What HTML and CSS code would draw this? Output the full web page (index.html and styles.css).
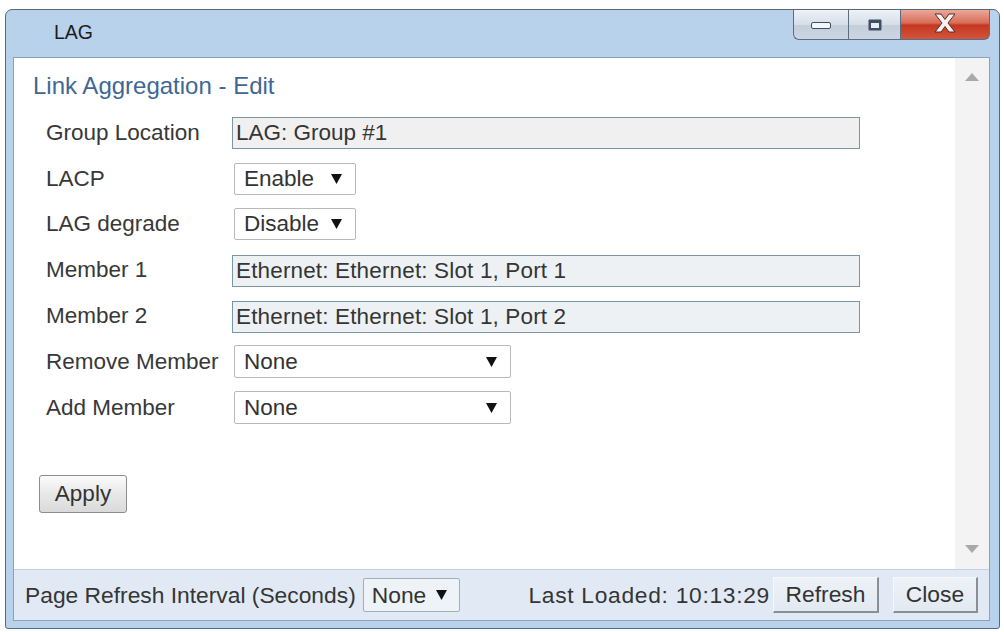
FILE: index.html
```html
<!DOCTYPE html>
<html>
<head>
<meta charset="utf-8">
<title>LAG</title>
<link rel="stylesheet" href="styles.css">
</head>
<body>
<div class="window">
  <div class="titlebar">
    <div class="title">LAG</div>
    <div class="controls">
      <div class="cbtn min">
        <svg width="20" height="8" viewBox="0 0 20 8"><rect x="0.5" y="0.5" width="19" height="6" rx="1.5" fill="#f4f7fa" stroke="#3f4f63"/></svg>
      </div>
      <div class="cbtn max">
        <svg width="14" height="12" viewBox="0 0 14 12"><rect x="0.5" y="0.5" width="13" height="11" rx="1" fill="#3f4f63"/><rect x="3" y="4" width="8" height="5" fill="#e8edf3"/></svg>
      </div>
      <div class="cbtn close">
        <svg width="24" height="20" viewBox="0 0 24 20"><path d="M2 1 H8 L12 6.5 L16 1 H22 L15 10 L22 19 H16 L12 13.5 L8 19 H2 L9 10 Z" fill="#f7f2f0" stroke="#5b2a22" stroke-width="1" stroke-linejoin="round"/></svg>
      </div>
    </div>
  </div>
  <div class="client">
    <div class="body">
      <div class="main">
        <div class="heading">Link Aggregation - Edit</div>
        <div class="form">
          <div class="label">Group Location</div>
          <div class="field"><div class="textbox">LAG: Group #1</div></div>
          <div class="label">LACP</div>
          <div class="field"><div class="select small"><span>Enable</span><svg class="arr" width="11" height="10" viewBox="0 0 11 10"><polygon points="0,0 11,0 5.5,10" fill="#111"/></svg></div></div>
          <div class="label">LAG degrade</div>
          <div class="field"><div class="select small"><span>Disable</span><svg class="arr" width="11" height="10" viewBox="0 0 11 10"><polygon points="0,0 11,0 5.5,10" fill="#111"/></svg></div></div>
          <div class="label">Member 1</div>
          <div class="field"><div class="textbox blue">Ethernet: Ethernet: Slot 1, Port 1</div></div>
          <div class="label">Member 2</div>
          <div class="field"><div class="textbox blue">Ethernet: Ethernet: Slot 1, Port 2</div></div>
          <div class="label">Remove Member</div>
          <div class="field"><div class="select wide"><span>None</span><svg class="arr" width="11" height="10" viewBox="0 0 11 10"><polygon points="0,0 11,0 5.5,10" fill="#111"/></svg></div></div>
          <div class="label">Add Member</div>
          <div class="field"><div class="select wide"><span>None</span><svg class="arr" width="11" height="10" viewBox="0 0 11 10"><polygon points="0,0 11,0 5.5,10" fill="#111"/></svg></div></div>
        </div>
        <div class="apply">Apply</div>
      </div>
      <div class="scrollbar">
        <svg width="14" height="8" viewBox="0 0 14 8"><polygon points="0,8 14,8 7,0" fill="#a9a9a9"/></svg>
        <svg width="14" height="8" viewBox="0 0 14 8"><polygon points="0,0 14,0 7,8" fill="#a9a9a9"/></svg>
      </div>
    </div>
    <div class="footer">
      <span class="ftext">Page Refresh Interval (Seconds)</span>
      <div class="select fsel"><span>None</span><svg class="arr" width="11" height="10" viewBox="0 0 11 10"><polygon points="0,0 11,0 5.5,10" fill="#111"/></svg></div>
      <span class="loaded">Last Loaded: 10:13:29</span>
      <div class="fbtn refresh">Refresh</div>
      <div class="fbtn closeb">Close</div>
    </div>
  </div>
</div>
</body>
</html>
```

FILE: styles.css
```css
html, body {
  margin: 0;
  padding: 0;
  background: #ffffff;
}
body {
  font-family: "Liberation Sans", Arial, sans-serif;
  color: #333333;
}
.window {
  box-sizing: border-box;
  margin: 9px 0 0 5px;
  width: 995px;
  height: 620px;
  border: 1px solid #56697d;
  border-radius: 7px 7px 3px 3px;
  background: #b9d2ec;
  display: flex;
  flex-direction: column;
}
.titlebar {
  height: 47px;
  flex: none;
  display: flex;
  justify-content: space-between;
  align-items: flex-start;
}
.title {
  margin: 12px 0 0 48px;
  font-size: 19.5px;
  line-height: 20px;
  color: #1c1c1c;
}
.controls {
  display: flex;
  margin-right: 9px;
  height: 30px;
}
.cbtn {
  box-sizing: border-box;
  height: 30px;
  display: flex;
  align-items: center;
  justify-content: center;
  border: 1px solid #5b6d80;
  border-top: none;
}
.min {
  width: 55px;
  border-right: none;
  border-bottom-left-radius: 6px;
  background: linear-gradient(#eef2f7, #d6dee8 50%, #c3cedb 51%, #ccd6e2);
}
.min svg { margin-top: 3px; }
.max {
  width: 52px;
  border-right: none;
  background: linear-gradient(#eef2f7, #d6dee8 50%, #c3cedb 51%, #ccd6e2);
}
.close {
  width: 90px;
  border-bottom-right-radius: 6px;
  background: linear-gradient(#e9a898, #d86c58 45%, #c5371f 52%, #d2553d);
}
.close svg { margin-top: -3px; }
.client {
  flex: 1;
  margin: 0 9px 7px 7px;
  border: 1px solid #8ca2b8;
  background: #ffffff;
  display: flex;
  flex-direction: column;
  min-height: 0;
}
.body {
  flex: 1;
  display: flex;
  min-height: 0;
}
.main {
  flex: 1;
  padding: 14px 0 0 19px;
}
.heading {
  font-size: 24px;
  line-height: 28px;
  color: #3f6796;
  margin-bottom: 10px;
}
.form {
  display: grid;
  grid-template-columns: 186px auto;
  grid-auto-rows: 45.8px;
  align-items: center;
  margin-left: 13px;
}
.label {
  font-size: 22.5px;
  color: #383838;
  white-space: nowrap;
}
.field {
  display: flex;
  align-items: center;
}
.textbox {
  box-sizing: border-box;
  width: 628px;
  height: 32px;
  margin-top: 1px;
  border: 1px solid #7a96a4;
  background: #f0f0f0;
  font-size: 22.5px;
  line-height: 30px;
  padding-left: 3px;
  color: #353535;
  white-space: nowrap;
}
.textbox.blue {
  background: #edf1f4;
  letter-spacing: 0.15px;
}
.select {
  box-sizing: border-box;
  height: 32px;
  border: 1px solid #b9b9b9;
  border-radius: 2px;
  background: #ffffff;
  display: flex;
  align-items: center;
  justify-content: space-between;
  padding: 0 13px 0 9px;
  font-size: 22.5px;
  color: #333333;
}
.select.small {
  width: 122px;
  margin-left: 2px;
}
.select.wide {
  width: 277px;
  height: 33px;
  margin-left: 2px;
}
.arr { flex: none; }
.apply {
  box-sizing: border-box;
  width: 88px;
  height: 38px;
  margin: 44px 0 0 6px;
  border: 1px solid #8c8c8c;
  border-radius: 3px;
  background: linear-gradient(#fbfbfb, #e8e8e8 50%, #dadada);
  font-size: 22.5px;
  line-height: 36px;
  text-align: center;
  color: #333333;
}
.scrollbar {
  width: 34px;
  flex: none;
  background: #f3f3f3;
  display: flex;
  flex-direction: column;
  justify-content: space-between;
  align-items: center;
  padding: 15px 0 16px;
  box-sizing: border-box;
}
.footer {
  height: 51px;
  flex: none;
  box-sizing: border-box;
  background: #e1eaf4;
  border-top: 1px solid #c3d2e2;
  display: flex;
  align-items: center;
  padding: 0 11px 0 11px;
  font-size: 22.8px;
  color: #353535;
}
.ftext { white-space: nowrap; }
.fsel {
  width: 97px;
  height: 34px;
  margin-left: 7px;
  background: #eef3f8;
  border-color: #a5adb6;
  padding: 0 12px 0 8px;
  font-size: 22.8px;
}
.loaded {
  margin-left: auto;
  white-space: nowrap;
  letter-spacing: 0.7px;
}
.fbtn {
  box-sizing: border-box;
  height: 36px;
  line-height: 33px;
  text-align: center;
  background: linear-gradient(#eef2f7, #e2e9f1);
  border-top: 1px solid #f5f8fb;
  border-left: 1px solid #f5f8fb;
  border-right: 2px solid #8a8f96;
  border-bottom: 2px solid #8a8f96;
  color: #333333;
}
.refresh {
  width: 106px;
  margin-left: 3px;
}
.closeb {
  width: 85px;
  margin-left: 14px;
}
```
